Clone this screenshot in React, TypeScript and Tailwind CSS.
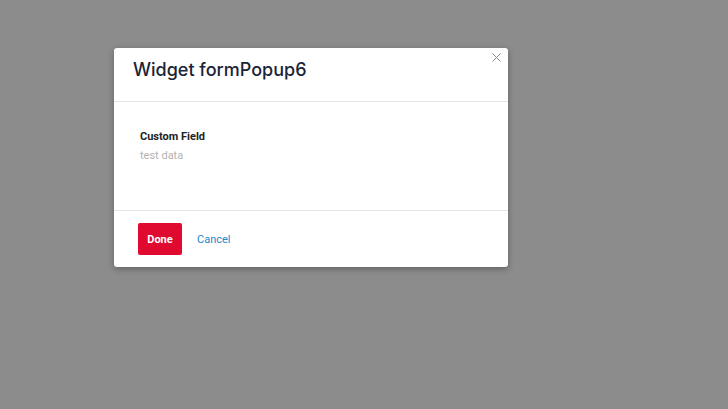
export default function App() {
  return (
    <div className="w-[728px] h-[409px] bg-[#8c8c8c] pt-[48px] pl-[114px] overflow-hidden" style={{ fontFamily: 'Roboto, "Liberation Sans", sans-serif' }}>
      <div className="relative w-[394px] bg-white rounded-[3px] shadow-[0_2px_6px_rgba(0,0,0,0.3)]">
        {/* close */}
        <button className="absolute right-[6px] top-[3px] w-[12px] h-[12px] flex items-center justify-center">
          <svg width="9" height="9" viewBox="0 0 9 9" stroke="#8a8a8a" strokeWidth="1" fill="none">
            <path d="M0.5 0.5 L8.5 8.5 M8.5 0.5 L0.5 8.5" />
          </svg>
        </button>

        {/* header */}
        <div className="h-[54px] border-b border-[#e4e4e4] pl-[19px] pt-[10px]">
          <h2 className="text-[18px] leading-[24px] font-medium text-[#1b2338]" style={{ fontFamily: 'Inter, Roboto, sans-serif' }}>
            Widget formPopup6
          </h2>
        </div>

        {/* body */}
        <div className="h-[109px] border-b border-[#e4e4e4] pl-[26px] pt-[28px]">
          <div className="text-[11px] leading-[14px] font-bold text-[#222]">Custom Field</div>
          <div className="text-[11px] leading-[14px] text-[#b3b3b3] mt-[5px]">test data</div>
        </div>

        {/* footer */}
        <div className="h-[56px] flex items-start pl-[24px] pt-[12px] gap-[15px]">
          <button className="w-[44px] h-[32px] pt-[2px] bg-[#e00a31] rounded-[2px] text-white text-[11px] font-bold">Done</button>
          <button className="h-[32px] pt-[2px] text-[11px] text-[#1b8ac6]">Cancel</button>
        </div>
      </div>
    </div>
  );
}
